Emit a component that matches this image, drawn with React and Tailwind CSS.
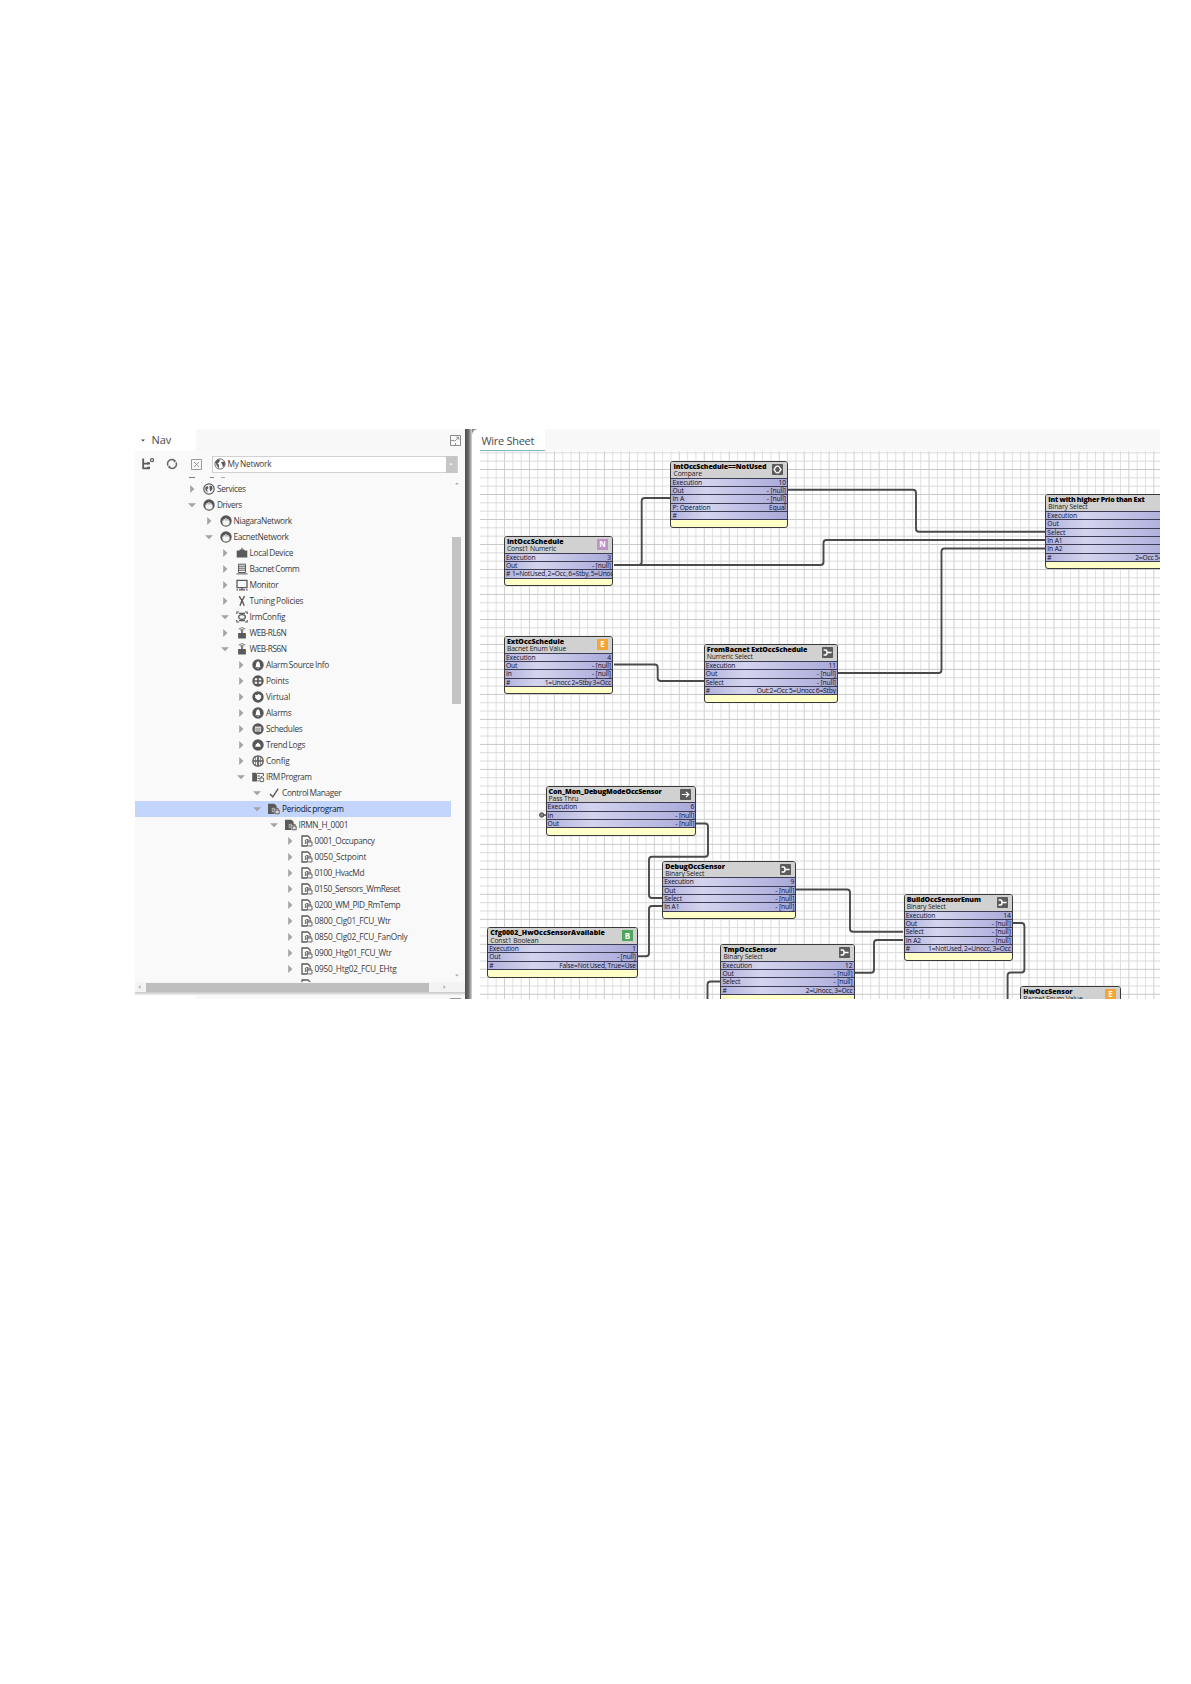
const CELL = 8.33;

const tree = [
  { label: 'Services', icon: 'services', level: 0, track: 'tracking-[-0.35px]' },
  { label: 'Drivers', icon: 'network', level: 0, open: true, track: 'tracking-[-0.4px]' },
  { label: 'NiagaraNetwork', icon: 'network', level: 1, track: 'tracking-[-0.35px]' },
  { label: 'EacnetNetwork', icon: 'network', level: 1, open: true, track: 'tracking-[-0.3px]' },
  { label: 'Local Device', icon: 'device', level: 2, track: 'tracking-[-0.3px]' },
  { label: 'Bacnet Comm', icon: 'comm', level: 2, track: 'tracking-[-0.35px]' },
  { label: 'Monitor', icon: 'monitor', level: 2, track: 'tracking-[-0.3px]' },
  { label: 'Tuning Policies', icon: 'tuning', level: 2, track: 'tracking-[-0.2px]' },
  { label: 'IrmConfig', icon: 'irm', level: 2, open: true, track: 'tracking-[-0.25px]' },
  { label: 'WEB-RL6N', icon: 'controller', level: 2, track: 'tracking-[-0.5px]' },
  { label: 'WEB-RS6N', icon: 'controller', level: 2, open: true, track: 'tracking-[-0.5px]' },
  { label: 'Alarm Source Info', icon: 'bell', level: 3, track: 'tracking-[-0.3px]' },
  { label: 'Points', icon: 'points', level: 3, track: 'tracking-[-0.2px]' },
  { label: 'Virtual', icon: 'virtual', level: 3, track: 'tracking-[-0.15px]' },
  { label: 'Alarms', icon: 'bell', level: 3, track: 'tracking-[-0.25px]' },
  { label: 'Schedules', icon: 'schedule', level: 3, track: 'tracking-[-0.3px]' },
  { label: 'Trend Logs', icon: 'trend', level: 3, track: 'tracking-[-0.3px]' },
  { label: 'Config', icon: 'config', level: 3, track: 'tracking-[-0.2px]' },
  { label: 'IRM Program', icon: 'folder', level: 3, open: true, track: 'tracking-[-0.4px]' },
  { label: 'Control Manager', icon: 'check', level: 4, open: true, track: 'tracking-[-0.35px]' },
  { label: 'Periodic program', icon: 'program', level: 4, open: true, selected: true, track: 'tracking-[-0.3px]' },
  { label: 'IRMN_H_0001', icon: 'program', level: 5, open: true, track: 'tracking-[-0.35px]' },
  { label: '0001_Occupancy', icon: 'page', level: 6, track: 'tracking-[-0.35px]' },
  { label: '0050_Sctpoint', icon: 'page', level: 6, track: 'tracking-[-0.2px]' },
  { label: '0100_HvacMd', icon: 'page', level: 6, track: 'tracking-[-0.4px]' },
  { label: '0150_Sensors_WmReset', icon: 'page', level: 6, track: 'tracking-[-0.4px]' },
  { label: '0200_WM_PID_RmTemp', icon: 'page', level: 6, track: 'tracking-[-0.42px]' },
  { label: '0800_Clg01_FCU_Wtr', icon: 'page', level: 6, track: 'tracking-[-0.25px]' },
  { label: '0850_Clg02_FCU_FanOnly', icon: 'page', level: 6, track: 'tracking-[-0.25px]' },
  { label: '0900_Htg01_FCU_Wtr', icon: 'page', level: 6, track: 'tracking-[-0.3px]' },
  { label: '0950_Htg02_FCU_EHtg', icon: 'page', level: 6, track: 'tracking-[-0.25px]' },
  { label: '', icon: 'page', level: 6, hideArrow: true, track: '' },
];

const indents = [
  'pl-[52px]',
  'pl-[68.5px]',
  'pl-[84.5px]',
  'pl-[101px]',
  'pl-[117px]',
  'pl-[133.5px]',
  'pl-[149.5px]',
];

// col / row / span are counted in grid cells of the sheet
const nodes = [
  {
    name: 'IntOccSchedule==NotUsed', type: 'Compare', col: 23, row: 1, span: 14, badge: 'compare', track: 'tracking-[-0.12px]',
    slots: [['Execution', '10'], ['Out', '- [null]'], ['In A', '- [null]'], ['P: Operation', 'Equal'], ['#', '']],
  },
  {
    name: 'Int with higher Prio than Ext', type: 'Binary Select', col: 68, row: 5, span: 16, badge: 'select', track: 'tracking-[-0.18px]',
    slots: [['Execution', ''], ['Out', ''], ['Select', ''], ['In A1', ''], ['In A2', ''], ['#', '2=Occ 5=Unoc']],
  },
  {
    name: 'IntOccSchedule', type: 'Const1 Numeric', col: 3, row: 10, span: 13, badge: 'N', track: 'tracking-[0.05px]',
    slots: [['Execution', '3'], ['Out', '- [null]'], ['#', '1=NotUsed, 2=Occ, 6=Stby, 5=Unoc', true]],
  },
  {
    name: 'ExtOccSchedule', type: 'Bacnet Enum Value', col: 3, row: 22, span: 13, badge: 'E', track: 'tracking-[0px]',
    slots: [['Execution', '4'], ['Out', '- [null]'], ['In', '- [null]'], ['#', '1=Unocc 2=Stby 3=Occ']],
  },
  {
    name: 'FromBacnet ExtOccSchedule', type: 'Numeric Select', col: 27, row: 23, span: 16, badge: 'select', track: 'tracking-[-0.08px]',
    slots: [['Execution', '11'], ['Out', '- [null]'], ['Select', '- [null]'], ['#', 'Out:2=Occ 5=Unocc 6=Stby']],
  },
  {
    name: 'Con_Mon_DebugModeOccSensor', type: 'Pass Thru', col: 8, row: 40, span: 18, badge: 'pass', track: 'tracking-[-0.15px]',
    slots: [['Execution', '6'], ['In', '- [null]'], ['Out', '- [null]']],
  },
  {
    name: 'DebugOccSensor', type: 'Binary Select', col: 22, row: 49, span: 16, badge: 'select', track: 'tracking-[-0.05px]',
    slots: [['Execution', '9'], ['Out', '- [null]'], ['Select', '- [null]'], ['In A1', '- [null]']],
  },
  {
    name: 'BuildOccSensorEnum', type: 'Binary Select', col: 51, row: 53, span: 13, badge: 'select', track: 'tracking-[-0.12px]',
    slots: [['Execution', '14'], ['Out', '- [null]'], ['Select', '- [null]'], ['In A2', '- [null]'], ['#', '1=NotUsed, 2=Unocc, 3=Occ']],
  },
  {
    name: 'Cfg0002_HwOccSensorAvailable', type: 'Const1 Boolean', col: 1, row: 57, span: 18, badge: 'B', track: 'tracking-[0px]',
    slots: [['Execution', '1'], ['Out', '- [null]'], ['#', 'False=Not Used, True=Use']],
  },
  {
    name: 'TmpOccSensor', type: 'Binary Select', col: 29, row: 59, span: 16, badge: 'select', track: 'tracking-[0px]',
    slots: [['Execution', '12'], ['Out', '- [null]'], ['Select', '- [null]'], ['#', '2=Unocc, 3=Occ']],
  },
  {
    name: 'HwOccSensor', type: 'Bacnet Enum Value', col: 65, row: 64, span: 12, badge: 'E', track: 'tracking-[0px]',
    slots: [],
  },
];

// corner points of every link, in sheet pixels
const wires = [
  [[134, 114], [343.5, 114], [343.5, 89], [566, 89]],
  [[155, 114], [161.7, 114], [161.7, 47], [191, 47]],
  [[308, 38.7], [436, 38.7], [436, 80.7], [566, 80.7]],
  [[358, 222], [461.5, 222], [461.5, 97.5], [566, 97.5]],
  [[134, 213.5], [177.7, 213.5], [177.7, 230], [224, 230]],
  [[216, 372.5], [228, 372.5], [228, 405.7], [169, 405.7], [169, 447], [182, 447]],
  [[158, 505.3], [169, 505.3], [169, 455], [182, 455]],
  [[316, 438.5], [370, 438.5], [370, 480.7], [423, 480.7]],
  [[374, 521.7], [394, 521.7], [394, 489], [423, 489]],
  [[532, 472], [544.4, 472], [544.4, 521.5], [527.6, 521.5], [527.6, 560]],
  [[241, 530.5], [227.5, 530.5], [227.5, 560]],
];

const gridCols = Array.from({ length: 83 }, (_, i) => 7.83 + i * 8.325);
const gridRows = Array.from({ length: 67 }, (_, i) => 1.84 + i * 8.33);

function roundedPath(points, r = 3) {
  let d = `M${points[0][0]} ${points[0][1]}`;
  for (let i = 1; i < points.length - 1; i++) {
    const [px, py] = points[i - 1];
    const [x, y] = points[i];
    const [nx, ny] = points[i + 1];
    d += ` L${x - Math.sign(x - px) * r} ${y - Math.sign(y - py) * r}`;
    d += ` Q${x} ${y} ${x + Math.sign(nx - x) * r} ${y + Math.sign(ny - y) * r}`;
  }
  const last = points[points.length - 1];
  return `${d} L${last[0]} ${last[1]}`;
}

function Disc({ children }) {
  return (
    <>
      <circle cx="6" cy="6" r="5.7" fill="#565656" stroke="none" />
      {children}
    </>
  );
}

function TreeIcon({ name }) {
  return (
    <svg viewBox="0 0 12 12" className="w-3 h-3 shrink-0 overflow-visible" fill="none" stroke="#5a5a5a">
      {name === 'services' && (
        <>
          <circle cx="6" cy="6" r="5.2" strokeWidth="1.2" />
          <path d="M2.2 4.5 L4.5 3 L5.5 5 L4 6.5 L4.8 9.4 L2.6 7.5 Z M6.5 2.6 L9 3.3 L9.5 6 L7.5 8.8 L6.6 6 Z" fill="#5a5a5a" stroke="none" />
        </>
      )}
      {name === 'network' && (
        <Disc>
          <path d="M2.4 5.4 H9.6 V8 Q9 10.6 6 10.6 Q3 10.6 2.4 8 Z M3.6 4 H4.8 V5.6 H3.6 Z M5.4 3 H6.6 V5.6 H5.4 Z M7.2 4 H8.4 V5.6 H7.2 Z" fill="#f6f6f6" stroke="none" />
        </Disc>
      )}
      {name === 'device' && <path d="M.7 3.6 H3.6 V2.5 H5.4 V.8 H6.6 V2.5 H8.4 V3.6 H11.3 V10.6 H.7 Z" fill="#5a5a5a" stroke="none" />}
      {name === 'comm' && (
        <path d="M2.5 1.2 H9.5 V9.5 H2.5 Z M2.5 3.2 H9.5 M2.5 5.2 H9.5 M2.5 7.2 H9.5 M.5 10.9 H11.5" />
      )}
      {name === 'monitor' && (
        <path d="M1 1.3 H11 V8.6 H1 Z M3 10.8 H9 M6 8.6 V10.8 M.4 10.8 H2 M10 10.8 H11.6" strokeWidth="1.3" />
      )}
      {name === 'tuning' && (
        <path d="M3.6 1 C3.6 3.5 5.2 3.4 6 5.5 C6.8 3.4 8.2 3.5 8.2 1 M6 5.3 L4 10.8 M6 5.3 L8.2 10.8" strokeWidth="1.4" />
      )}
      {name === 'irm' && (
        <>
          <ellipse cx="6" cy="6" rx="3.4" ry="2.3" strokeWidth="1.3" />
          <path d="M.8 3 V1 H3 M9 1 H11.2 V3 M.8 9 V11 H3 M9 11 H11.2 V9 M3 2.4 H9 M3 9.6 H9" strokeWidth="1.1" />
        </>
      )}
      {name === 'controller' && (
        <>
          <path d="M2.1 6 H9.9 V11.4 H2.1 Z M5.2 3.2 H6.8 V6 H5.2 Z" fill="#5a5a5a" stroke="none" />
          <path d="M2.6 2 Q6 -.8 9.4 2 M4 3.2 Q6 1.8 8 3.2" strokeWidth=".8" />
        </>
      )}
      {name === 'bell' && (
        <Disc>
          <path d="M6 2.2 C8 2.8 7.8 5 8.2 7.4 L9 8.3 H3 L3.8 7.4 C4.2 5 4 2.8 6 2.2 Z M5 9 H7 L6 9.8 Z" fill="#fff" stroke="none" />
        </Disc>
      )}
      {name === 'points' && (
        <Disc>
          <path d="M3 3.2 H5.2 V5.2 H2.4 Z M6.8 3.2 H9 L9.6 5.2 H6.8 Z M2.4 6.8 H5.2 V8.8 H3 Z M6.8 6.8 H9.6 L9 8.8 H6.8 Z" fill="#f4f4f4" stroke="none" />
        </Disc>
      )}
      {name === 'virtual' && (
        <Disc>
          <path d="M3.2 3.6 L5 4.2 L6.5 3 L9.2 4.6 L9 7 L7.2 9 L5.6 9 L3.2 6.8 Z" fill="#fff" stroke="none" />
        </Disc>
      )}
      {name === 'schedule' && (
        <Disc>
          <path d="M2.8 3.6 H9.2 V8.6 H2.8 Z" fill="#eee" stroke="none" />
          <path d="M2.8 5.2 H9.2 M2.8 7 H9.2 M5 5.2 V8.6 M7 5.2 V8.6" strokeWidth=".5" />
        </Disc>
      )}
      {name === 'trend' && (
        <Disc>
          <path d="M3 7.8 L4.2 5.2 L6 3.4 L7.8 5.2 L9 7.8 Z" fill="#fff" stroke="none" />
        </Disc>
      )}
      {name === 'config' && (
        <>
          <circle cx="6" cy="6" r="5.2" strokeWidth="1.3" />
          <path d="M6 1 V11 M1 6 H11" strokeWidth="1.7" />
          <path d="M3.6 2 V10 M8.4 2 V10" strokeWidth=".7" />
        </>
      )}
      {name === 'folder' && (
        <>
          <path d="M.2 1.8 H4 L5 2.8 V10.4 H.2 Z" fill="#5a5a5a" stroke="none" />
          <path d="M5 2.4 H11.4 V5 M5.5 5 H8 M5.5 7.4 H7.5 M5.5 9.8 H7" />
          <path d="M8 7 H11.6 V10.6 H8 Z M9 7 V5.6 H10.6" strokeWidth=".9" />
        </>
      )}
      {name === 'check' && <path d="M2 7 L4.8 9.8 L10.2 1.6" strokeWidth="1.4" />}
      {name === 'program' && (
        <>
          <path d="M0 .8 H6.4 L8.6 2.8 V6 H6.4 V11 H0 Z" fill="#5a5a5a" stroke="none" />
          <path d="M4 5.6 L6.4 5 L6 8 L4.4 9 Z" stroke="#ccc" strokeWidth=".8" />
          <path d="M7.2 7.2 H11.2 V10.8 H7.2 Z M8 7.2 V5.4 H10.2 V7.2" fill="#ddd" strokeWidth=".9" />
        </>
      )}
      {name === 'page' && (
        <>
          <path d="M6 11 H1 V1 H7 L9.2 3.2 V4.6" strokeWidth="1.3" />
          <path d="M4.4 5 L7 4.4 L6 7.6 L4.4 8.6 Z M6.6 7 H11 V11 H6.6 Z M7.8 7 V5.2 H9.8 V7" strokeWidth=".9" />
        </>
      )}
    </svg>
  );
}

function Arrow({ open }) {
  return (
    <svg viewBox="0 0 10 10" className="w-2.5 h-2.5 shrink-0" fill="#a3a3a3">
      <path d={open ? 'M1 3.2 H9 L5 7.2 Z' : 'M3.2 1 L7.4 5 L3.2 9 Z'} />
    </svg>
  );
}

function TreeRow({ item }) {
  return (
    <div className={`flex items-center h-4 w-[316px] shrink-0 ${indents[item.level]} ${item.selected ? 'bg-[#c4d5fd]' : ''}`}>
      <div className={item.hideArrow ? 'invisible flex' : 'flex'}>
        <Arrow open={item.open} />
      </div>
      <div className="flex pl-[6px] pr-[2px]">
        <TreeIcon name={item.icon} />
      </div>
      <span className={`whitespace-nowrap text-[8.3px] leading-4 [word-spacing:-0.6px] ${item.track} ${item.selected ? 'text-[#0c1228]' : 'text-[#3c3c3c]'}`}>
        {item.label}
      </span>
    </div>
  );
}

function PopOutIcon() {
  return (
    <svg viewBox="0 0 11 11" className="w-[11px] h-[11px]" fill="none" stroke="#8a8a8a">
      <path d="M.5 .5 H10.5 V10.5 H.5 Z" />
      <path d="M.5 5.5 H4.5 M5.5 8 V10.5 M4.5 6.5 L8.6 2.4 M6.2 2.2 H8.8 V4.8" strokeWidth=".9" />
    </svg>
  );
}

function NavPanel() {
  return (
    <div className="w-[330px] h-full flex flex-col bg-[#f9f9f9] overflow-hidden">
      <div className="flex items-center h-[22px] shrink-0 bg-[#f8f8f8]">
        <div className="flex items-center w-[61px] h-full bg-white pt-px">
          <svg viewBox="0 0 4 3" className="w-1 h-[3px] ml-[6px] mr-[6.5px]" fill="#444">
            <path d="M0 .5 H4 L2 2.5 Z" />
          </svg>
          <span className="text-[11px] text-[#4a4a4a] tracking-[-0.1px]">Nav</span>
        </div>
        <div className="ml-auto mr-[4px]">
          <PopOutIcon />
        </div>
      </div>

      <div className="flex items-center h-[26px] shrink-0">
        <svg viewBox="0 0 12 12" className="w-3 h-3 ml-[6.5px]" fill="none" stroke="#5a5a5a" strokeWidth="1.8">
          <path d="M1.2 .6 V10.4 H7.5 M1.2 5.6 H6" />
          <path d="M5 5.4 H8 M5 9.8 H8" strokeWidth="2.2" />
          <circle cx="10" cy="2.2" r="1.5" strokeWidth="1.2" />
        </svg>
        <svg viewBox="0 0 12 12" className="w-3 h-3 ml-[12px]" fill="none" stroke="#666" strokeWidth="1.5">
          <path d="M2 7.6 A4.2 4.2 0 0 1 8.6 2.7 M10 4.4 A4.2 4.2 0 0 1 3.4 9.3" />
          <path d="M7.4 1 L10.4 3 L8 4.6 Z M4.6 11 L1.6 9 L4 7.4 Z" fill="#666" stroke="none" />
        </svg>
        <svg viewBox="0 0 11 11" className="w-[11px] h-[11px] ml-[13px]" fill="none" stroke="#9a9a9a">
          <path d="M.5 .5 H10.5 V10.5 H.5 Z M3 3 L8 8 M8 3 L3 8" />
        </svg>
        <div className="flex items-center w-[246px] h-[17px] ml-[10px] bg-white border border-[#d2d2d2]">
          <svg viewBox="0 0 12 12" className="w-3 h-3 ml-px" fill="none" stroke="#5a5a5a">
            <circle cx="6" cy="6" r="5.1" strokeWidth=".9" />
            <path d="M1.2 4 L4 1.2 L6 2 L5 4.4 L3.4 5 L5 7 L5 10.4 L3 8 L2 6 Z M7 4 L10.6 3.4 L11 6.4 L9 9.6 L8.4 7 Z" fill="#5a5a5a" stroke="none" />
          </svg>
          <span className="ml-[2px] text-[8.3px] text-[#3c3c3c] tracking-[-0.25px] [word-spacing:-0.5px]">My Network</span>
          <div className="flex items-center justify-center w-[11px] h-[17px] ml-auto bg-[#c6c6c6]">
            <svg viewBox="0 0 4 3" className="w-1 h-[3px]" fill="#f4f4f4">
              <path d="M0 .5 H4 L2 2.5 Z" />
            </svg>
          </div>
        </div>
      </div>

      <div className="flex h-[505px] shrink-0">
        <div className="flex flex-col w-[317px] overflow-hidden">
          <div className="flex h-1 shrink-0">
            <div className="w-1.5 h-px ml-[54px] bg-[#777]" />
            <div className="w-1 h-px ml-[15px] bg-[#888]" />
            <div className="w-1 h-px ml-[7px] bg-[#aaa]" />
          </div>
          {tree.map((item, i) => (
            <TreeRow key={i} item={item} />
          ))}
        </div>
        <div className="flex flex-col items-center w-[9px]">
          <svg viewBox="0 0 4 3" className="w-1 h-[3px] mt-[5px] shrink-0" fill="#aaa">
            <path d="M0 2.5 H4 L2 .5 Z" />
          </svg>
          <div className="w-[9px] h-[167px] mt-[52px] bg-[#c3c3c3]" />
          <svg viewBox="0 0 4 3" className="w-1 h-[3px] mt-auto mb-[5px] shrink-0" fill="#aaa">
            <path d="M0 .5 H4 L2 2.5 Z" />
          </svg>
        </div>
      </div>

      <div className="flex items-center h-[10px] shrink-0 bg-[#f3f3f3]">
        <svg viewBox="0 0 3 4" className="w-[3px] h-1 ml-[3px] mr-[5px]" fill="#aaa">
          <path d="M2.5 0 V4 L.5 2 Z" />
        </svg>
        <div className="w-[283px] h-[9px] bg-[#bebebe]" />
        <svg viewBox="0 0 3 4" className="w-[3px] h-1 ml-[14px]" fill="#aaa">
          <path d="M.5 0 V4 L2.5 2 Z" />
        </svg>
      </div>
      <div className="h-[3px] shrink-0 bg-gradient-to-b from-[#c4c4c4] to-[#f0f0f0]" />
      <div className="flex flex-1 items-end">
        <div className="w-[61px] h-full bg-white" />
        <div className="w-[11px] h-px ml-auto mr-[4px] bg-[#999]" />
      </div>
    </div>
  );
}

function Badge({ kind }) {
  if (kind === 'N' || kind === 'E' || kind === 'B') {
    const color = { N: 'bg-[#bf92c9]', E: 'bg-[#f5a535]', B: 'bg-[#4fa75c]' }[kind];
    return (
      <div className={`flex items-center justify-center w-[11px] h-[11px] text-[8px] leading-none font-bold text-white ${color}`}>
        {kind}
      </div>
    );
  }
  return (
    <svg viewBox="0 0 11 11" className="w-[11px] h-[11px]" fill="none" stroke="#fff">
      <rect width="11" height="11" rx=".8" fill="#5c5c5c" stroke="none" />
      {kind === 'compare' && (
        <path d="M4.4 2.2 L2 5.5 L4.4 8.8 M6.6 2.2 L9 5.5 L6.6 8.8 M4.4 2.2 H6.6 M4.4 8.8 H6.6" strokeWidth="1.3" />
      )}
      {kind === 'select' && <path d="M1.6 3 H3.6 Q5 3 5 5.5 H9.6 M1.6 8 H3.6 Q5 8 5 5.5" strokeWidth="1.5" />}
      {kind === 'pass' && <path d="M1.8 5.5 H8.6 M6 3 L8.8 5.5 L6 8" strokeWidth="1.2" />}
    </svg>
  );
}

function Node({ node }) {
  return (
    <div
      className="absolute flex flex-col rounded-[3px] border border-[#3a3a3a] bg-[#ffffc8] overflow-hidden"
      style={{
        left: node.col * CELL - 1.1,
        top: node.row * CELL + 1.4,
        width: node.span * CELL + 0.8,
        height: (node.slots.length + 3) * CELL + 0.4,
      }}
    >
      <div className="flex justify-between h-[15.9px] shrink-0 bg-[#d0d1d0] pl-[2px] pr-[4px]">
        <div className="flex flex-col whitespace-nowrap">
          <span className={`h-[8.3px] text-[7px] leading-[9px] font-extrabold text-black [word-spacing:-0.2px] ${node.track}`}>{node.name}</span>
          <span className="text-[6.8px] leading-[7px] text-[#222] tracking-[-0.12px]">{node.type}</span>
        </div>
        <div className="pt-[2px]">
          <Badge kind={node.badge} />
        </div>
      </div>
      {node.slots.map(([slot, value, wide]) => (
        <div
          key={slot}
          className="flex justify-between h-[8.33px] shrink-0 border-t border-[#3c3c55] bg-gradient-to-r from-[#b2b2dc] via-[#d4d4ee] via-30% to-[#a9a9da] px-px text-[6.7px] leading-[7.6px] whitespace-nowrap text-[#12121f] tracking-[-0.1px]"
        >
          <span>{slot}</span>
          <span className={wide ? 'w-[99px] tracking-[-0.2px] [word-spacing:-0.6px]' : slot === '#' ? 'tracking-[-0.18px] [word-spacing:-0.5px]' : ''}>{value}</span>
        </div>
      ))}
      <div className="flex-1 border-t border-[#3c3c55]" />
    </div>
  );
}

function WireSheet() {
  return (
    <div className="flex-1 h-full flex flex-col pl-2 bg-white rounded-tl-[6px] overflow-hidden">
      <div className="flex h-[22px] shrink-0 bg-[#f8f8f8]">
        <div className="w-[65px] h-full bg-white border-b border-[#7fb4c6] pl-[1.5px] text-[11px] leading-[24px] text-[#4a4a4a] whitespace-nowrap tracking-[-0.3px]">
          Wire Sheet
        </div>
      </div>
      <div className="relative flex-1 overflow-hidden">
        <svg className="absolute inset-0 w-full h-full">
          {gridCols.map((x, i) => (
            <path key={x} d={`M${x} 0 V548`} stroke={i % 3 === 2 ? '#cfcfcf' : '#e0e0e0'} />
          ))}
          {gridRows.map((y, i) => (
            <path key={y} d={`M0 ${y} H680`} stroke={i % 3 === 2 ? '#c8c8c8' : '#dadada'} />
          ))}
          {wires.map((points, i) => (
            <path key={i} d={roundedPath(points)} fill="none" stroke="#4a4a4a" strokeWidth="1.9" />
          ))}
          <path d="M62 364 H66" stroke="#444" strokeWidth="1.4" />
          <circle cx="61.7" cy="364" r="2.2" fill="#888" stroke="#444" />
        </svg>
        {nodes.map((node) => (
          <Node key={node.name} node={node} />
        ))}
      </div>
    </div>
  );
}

export default function App() {
  return (
    <div className="w-[1191px] h-[1684px] bg-white pl-[135px] pt-[429px] font-['Open_Sans','Noto_Sans',sans-serif]">
      <div className="flex w-[1025px] h-[570px] overflow-hidden">
        <NavPanel />
        <div className="flex flex-1 min-w-0 bg-gradient-to-r from-[#4a4a4a] to-[#8a8a8a] to-[7px]">
          <div className="w-[7px] shrink-0 bg-gradient-to-r from-[#4c4c4c] via-[#6a6a6a] to-[#d8d8d8]" />
          <WireSheet />
        </div>
      </div>
    </div>
  );
}
